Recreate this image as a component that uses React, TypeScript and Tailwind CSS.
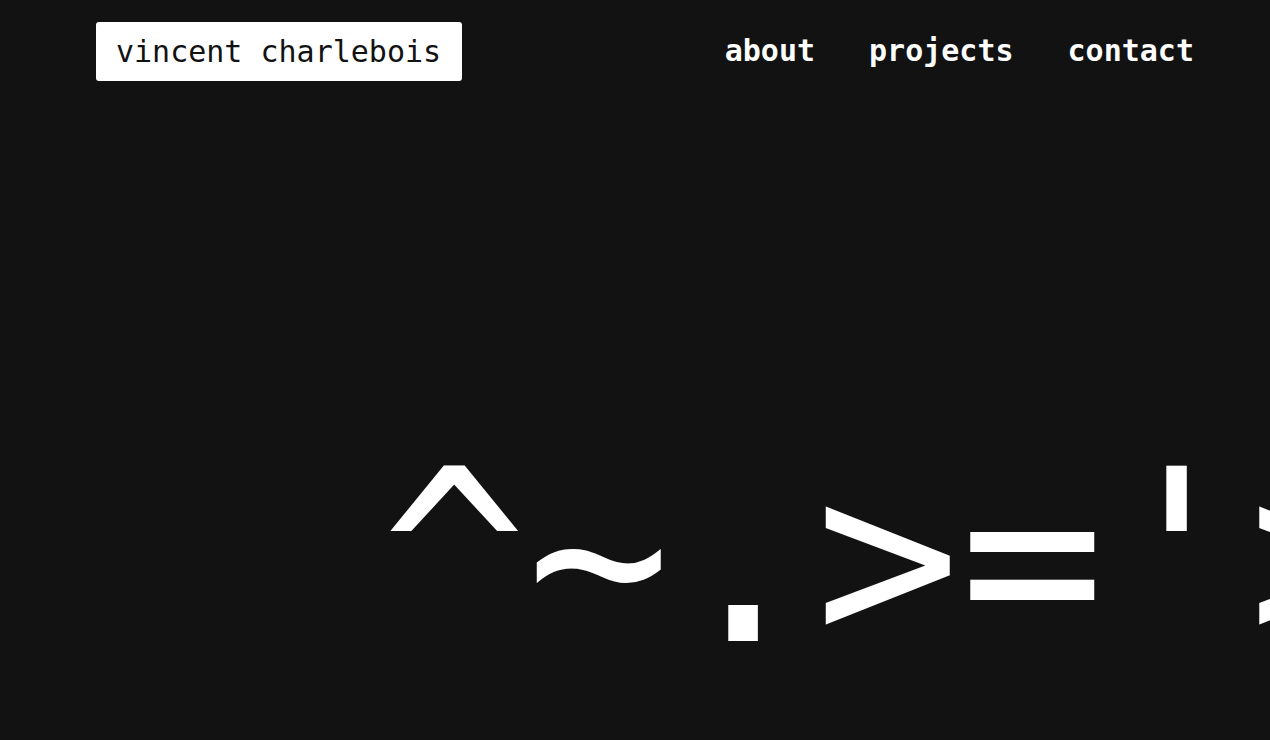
export default function App() {
  return (
    <div
      className="w-[1270px] h-[740px] overflow-hidden bg-[#121212] text-white flex flex-col"
      style={{ fontFamily: '"DejaVu Sans Mono", monospace' }}
    >
      <header className="flex items-center justify-between pl-[96px] pr-[76px] pt-[22px]">
        <div className="bg-white text-[#121212] rounded-[3px] h-[59px] pl-[20px] pr-[21px] flex items-center text-[30px] leading-none">
          vincent charlebois
        </div>
        <nav className="flex items-center gap-[54px] text-[30px] font-bold leading-none -mt-[2px]">
          <a>about</a>
          <a>projects</a>
          <a>contact</a>
        </nav>
      </header>
      <main className="flex-1 relative">
        <div className="absolute left-[382px] top-[357px] text-[240px] leading-none whitespace-nowrap">
          ^~.&gt;='&gt;
        </div>
      </main>
    </div>
  );
}
